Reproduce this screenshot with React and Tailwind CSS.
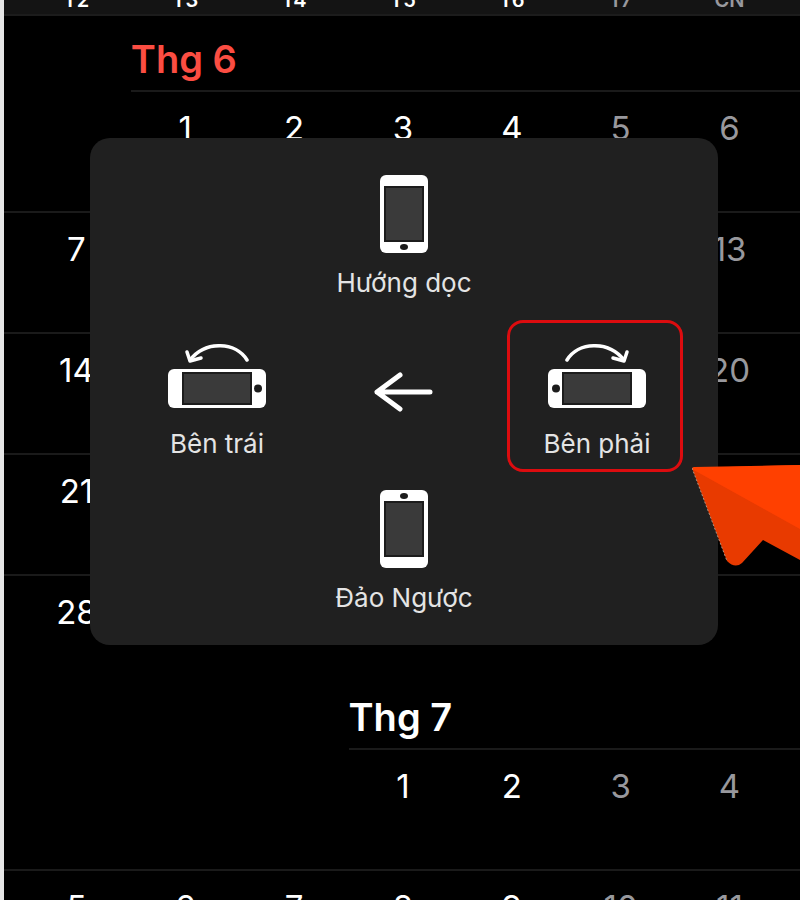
import React, { useState } from 'react';

const weekdays = ['T2', 'T3', 'T4', 'T5', 'T6', 'T7', 'CN'];

const months = [
  {
    name: 'Thg 6',
    offset: 1,
    current: true,
    weeks: [
      [null, 1, 2, 3, 4, 5, 6],
      [7, 8, 9, 10, 11, 12, 13],
      [14, 15, 16, 17, 18, 19, 20],
      [21, 22, 23, 24, 25, 26, 27],
      [28, 29, 30, null, null, null, null],
    ],
  },
  {
    name: 'Thg 7',
    offset: 3,
    current: false,
    weeks: [
      [null, null, null, 1, 2, 3, 4],
      [5, 6, 7, 8, 9, 10, 11],
    ],
  },
];

function Month({ month }) {
  const { name, offset, current, weeks } = month;

  return (
    <tbody>
      <tr className="h-[74px]">
        <td colSpan={offset + 1} />
        <th
          colSpan={8 - offset}
          scope="rowgroup"
          className={`pt-3 text-left align-middle text-[38px] leading-10 font-semibold ${current ? 'text-[#fb4d42]' : 'text-white'}`}
        >
          {name}
        </th>
      </tr>
      {weeks.map((week, row) => {
        // the first line of a month starts under its title
        const line = i => (row > 0 || i >= offset ? 'border-t-2 border-[#1a1a1a]' : '');
        const last = row === weeks.length - 1 && current;
        return (
          <tr key={row} className={last ? 'h-[100px]' : 'h-[121px]'}>
            <td className={line(-1)} />
            {week.map((day, i) => (
              <td
                key={i}
                className={`pt-4 text-center align-top text-[33px] leading-10 ${line(i)} ${i > 4 ? 'text-[#98989d]' : 'text-white'}`}
              >
                {day}
              </td>
            ))}
            <td className={line(7)} />
          </tr>
        );
      })}
    </tbody>
  );
}

function Calendar() {
  return (
    <table className="w-full table-fixed border-separate border-spacing-0">
      <colgroup>
        <col className="w-[18px]" />
        {weekdays.map(d => <col key={d} />)}
        <col className="w-4" />
      </colgroup>
      <thead className="bg-[#141414]">
        <tr>
          <th className="border-b-2 border-[#1c1c1c]" />
          {weekdays.map((d, i) => (
            <th
              key={d}
              scope="col"
              className={`border-b-2 border-[#1c1c1c] p-0 text-xl leading-7 font-semibold ${i > 4 ? 'text-[#98989d]' : 'text-white'}`}
            >
              <div className="flex h-[14px] items-end justify-center overflow-hidden">{d}</div>
            </th>
          ))}
          <th className="border-b-2 border-[#1c1c1c]" />
        </tr>
      </thead>
      {months.map(m => <Month key={m.name} month={m} />)}
    </table>
  );
}

function PhoneUpright({ flipped }) {
  return (
    <svg width="48" height="78" viewBox="0 0 48 78" className={flipped ? 'rotate-180' : ''} aria-hidden="true">
      <rect width="48" height="78" rx="6" fill="#fff" />
      <rect x="4" y="11" width="40" height="56" fill="#1c1c1c" />
      <rect x="6" y="13" width="36" height="52" fill="#3a3a3a" />
      <ellipse cx="24" cy="72" rx="4" ry="3" fill="#1c1c1c" />
    </svg>
  );
}

function PhoneSideways({ mirrored }) {
  return (
    <svg width="98" height="64" viewBox="0 0 98 64" className={mirrored ? '-scale-x-100' : ''} aria-hidden="true">
      <path d="M79 16C68-2 38-4 22 16" fill="none" stroke="#fff" strokeWidth="3.500" strokeLinecap="round" />
      <path d="M19 8L22 17L33 14" fill="none" stroke="#fff" strokeWidth="3.500" strokeLinecap="round" strokeLinejoin="round" />
      <rect y="25" width="98" height="39" rx="6" fill="#fff" />
      <rect x="14" y="28" width="70" height="33" fill="#1c1c1c" />
      <rect x="16" y="30" width="66" height="29" fill="#3a3a3a" />
      <circle cx="90" cy="44.500" r="4" fill="#1c1c1c" />
    </svg>
  );
}

function RotateMenu() {
  const [selected, setSelected] = useState('right');
  const label = 'text-[26px] leading-7 text-[#e4e4e4]';
  const side = 'flex h-[152px] w-[176px] flex-col items-center justify-self-center rounded-2xl border-3 pt-[21px]';
  const ring = id => (selected === id ? 'border-[#dc0c0f]' : 'border-transparent');

  return (
    <div className="flex w-[628px] flex-col items-center rounded-[20px] bg-[#202020] pt-[37px] pb-[33px]">
      <button className="flex flex-col items-center gap-4" onClick={() => setSelected('portrait')}>
        <PhoneUpright />
        <span className={label}>Hướng dọc</span>
      </button>

      <div className="mt-[23px] grid w-full grid-cols-[190px_182px_202px] items-center pl-8">
        <button className={`${side} ${ring('left')} gap-[22px]`} onClick={() => setSelected('left')}>
          <PhoneSideways />
          <span className={label}>Bên trái</span>
        </button>
        <button className="justify-self-center pb-2" aria-label="Quay lại">
          <svg width="60" height="40" viewBox="0 0 60 40" fill="none" stroke="#fff" strokeWidth="5" strokeLinecap="round" strokeLinejoin="round" aria-hidden="true">
            <path d="M57 20H4M27 3L4 20L27 37" />
          </svg>
        </button>
        <button className={`${side} ${ring('right')} gap-[22px] pl-1`} onClick={() => setSelected('right')}>
          <PhoneSideways mirrored />
          <span className={label}>Bên phải</span>
        </button>
      </div>

      <button className="mt-[18px] flex flex-col items-center gap-4" onClick={() => setSelected('flipped')}>
        <PhoneUpright flipped />
        <span className={label}>Đảo Ngược</span>
      </button>
    </div>
  );
}

function Pointer() {
  return (
    <svg width="108" height="102" viewBox="0 0 108 102" aria-hidden="true">
      <path d="M0 3L108 0V95L71 75L50 98Q43 104 35 96Z" fill="#e83a00" />
      <path d="M2 2L108 0V64L0 4Q0 2 2 2Z" fill="#ff4000" />
      <path d="M0 3L35 96" stroke="#b0907c" strokeWidth="1" strokeDasharray="2 2" />
    </svg>
  );
}

function App() {
  return (
    <div className="relative h-screen overflow-hidden border-l-4 border-[#e6e6e6] bg-black font-['Inter',sans-serif]">
      <Calendar />
      <div className="absolute inset-x-0 top-[138px] flex justify-center pl-1">
        <RotateMenu />
      </div>
      <div className="absolute top-[465px] right-0">
        <Pointer />
      </div>
    </div>
  );
}

export default App;
